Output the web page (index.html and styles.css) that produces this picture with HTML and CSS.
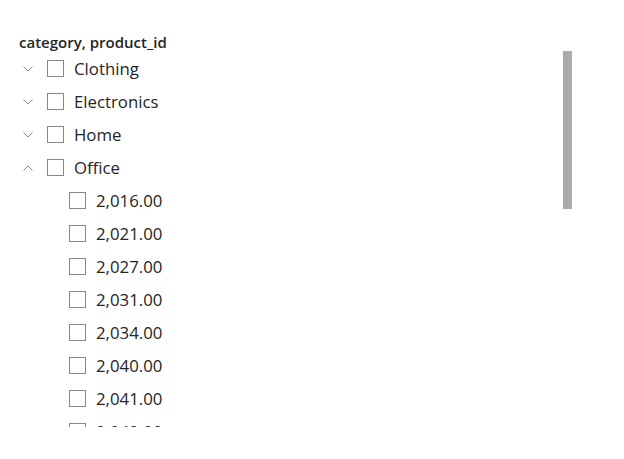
FILE: index.html
```html
<!DOCTYPE html>
<html>
<head>
<meta charset="utf-8">
<link rel="stylesheet" href="styles.css">
</head>
<body>
<div class="slicer">
  <div class="title">category, product_id</div>
  <div class="body">
    <div class="tree">
      <div class="row"><span class="chev"><svg width="10" height="6" viewBox="0 0 10 6"><path d="M0.5 0.5 L5 5 L9.5 0.5" fill="none" stroke="#8a8886" stroke-width="1"/></svg></span><span class="box"></span><span class="label">Clothing</span></div>
      <div class="row"><span class="chev"><svg width="10" height="6" viewBox="0 0 10 6"><path d="M0.5 0.5 L5 5 L9.5 0.5" fill="none" stroke="#8a8886" stroke-width="1"/></svg></span><span class="box"></span><span class="label">Electronics</span></div>
      <div class="row"><span class="chev"><svg width="10" height="6" viewBox="0 0 10 6"><path d="M0.5 0.5 L5 5 L9.5 0.5" fill="none" stroke="#8a8886" stroke-width="1"/></svg></span><span class="box"></span><span class="label">Home</span></div>
      <div class="row"><span class="chev"><svg width="10" height="6" viewBox="0 0 10 6"><path d="M0.5 5.5 L5 1 L9.5 5.5" fill="none" stroke="#8a8886" stroke-width="1"/></svg></span><span class="box"></span><span class="label">Office</span></div>
      <div class="row child"><span class="box"></span><span class="label">2,016.00</span></div>
      <div class="row child"><span class="box"></span><span class="label">2,021.00</span></div>
      <div class="row child"><span class="box"></span><span class="label">2,027.00</span></div>
      <div class="row child"><span class="box"></span><span class="label">2,031.00</span></div>
      <div class="row child"><span class="box"></span><span class="label">2,034.00</span></div>
      <div class="row child"><span class="box"></span><span class="label">2,040.00</span></div>
      <div class="row child"><span class="box"></span><span class="label">2,041.00</span></div>
      <div class="row child"><span class="box"></span><span class="label">2,042.00</span></div>
    </div>
    <div class="scroll"><div class="thumb"></div></div>
  </div>
</div>
</body>
</html>
```
FILE: styles.css
```css
html, body {
  margin: 0;
  padding: 0;
  background: #ffffff;
}
body {
  width: 624px;
  height: 459px;
  overflow: hidden;
  font-family: "Open Sans", "Noto Sans", sans-serif;
  color: #252423;
}
.slicer {
  padding: 33px 0 0 19px;
}
.title {
  font-size: 15px;
  line-height: 18px;
  height: 19px;
  font-weight: 600;
  color: #252423;
}
.body {
  display: flex;
  align-items: flex-start;
}
.tree {
  flex: 1;
  height: 375px;
  overflow: hidden;
}
.row {
  display: flex;
  align-items: center;
  height: 33px;
}
.chev {
  width: 28px;
  display: flex;
  align-items: center;
  padding-left: 4px;
  box-sizing: border-box;
}
.chev svg { display: block; }
.box {
  width: 17px;
  height: 17px;
  box-sizing: border-box;
  border: 1px solid #8a8886;
  flex: none;
}
.label {
  margin-left: 10px;
  font-size: 16.8px;
  white-space: nowrap;
}
.child {
  padding-left: 50px;
}
.scroll {
  width: 9px;
  margin-right: 52px;
}
.thumb {
  height: 158px;
  background: #ababab;
  margin-top: -1px;
}
```
